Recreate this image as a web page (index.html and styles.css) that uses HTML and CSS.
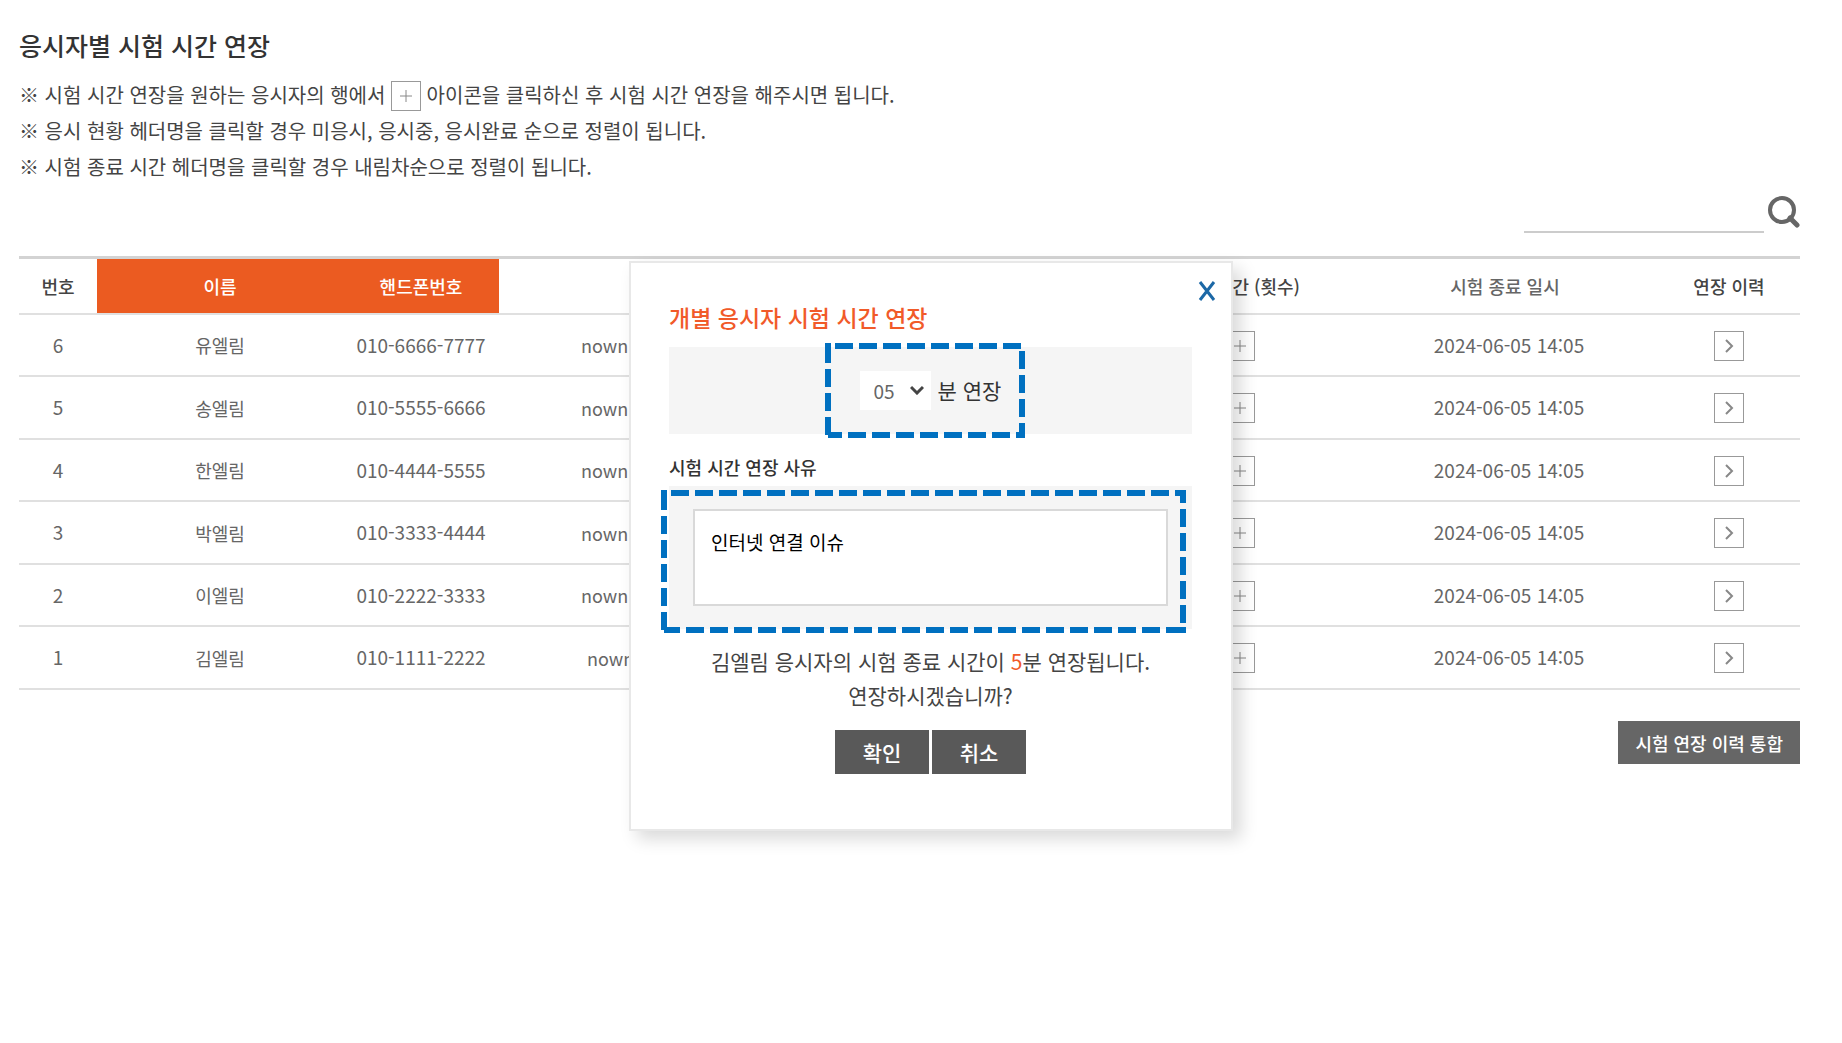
FILE: index.html
```
<!doctype html>
<html lang="ko">
    <head>
        <meta charset="UTF-8" />
        <meta name="viewport" content="width=device-width, initial-scale=1.0" />
        <title>응시자별 시험 시간 연장</title>
        <link rel="stylesheet" href="styles.css">
    </head>
    <body>
        <main>
            <h1>응시자별 시험 시간 연장</h1>
            <ul class="notes">
                <li>※ 시험 시간 연장을 원하는 응시자의 행에서 <span class="box"><svg width="14" height="14" viewBox="0 0 14 14"><path d="M7 1v12M1 7h12" /></svg></span> 아이콘을 클릭하신 후 시험 시간 연장을 해주시면 됩니다.</li>
                <li>※ 응시 현황 헤더명을 클릭할 경우 미응시, 응시중, 응시완료 순으로 정렬이 됩니다.</li>
                <li>※ 시험 종료 시간 헤더명을 클릭할 경우 내림차순으로 정렬이 됩니다.</li>
            </ul>

            <form class="search">
                <input type="search" aria-label="검색" />
                <button type="button" aria-label="검색">
                    <svg width="32" height="34" viewBox="0 0 32 34"><circle cx="14" cy="14" r="12" /><path d="M22 22l7 7" stroke-width="5" /></svg>
                </button>
            </form>

            <table>
                <colgroup>
                    <col class="col-no" />
                    <col class="col-name" />
                    <col class="col-phone" />
                    <col />
                    <col class="col-time" />
                    <col class="col-end" />
                    <col class="col-log" />
                </colgroup>
                <thead>
                    <tr>
                        <th>번호</th>
                        <th class="on">이름</th>
                        <th class="on">핸드폰번호</th>
                        <th></th>
                        <th class="time">시간 (횟수)</th>
                        <th class="end">시험 종료 일시</th>
                        <th>연장 이력</th>
                    </tr>
                </thead>
                <tbody>
                    <tr>
                        <td class="num">6</td>
                        <td>유엘림</td>
                        <td class="num">010-6666-7777</td>
                        <td class="mail">nown</td>
                        <td><button class="box" aria-label="연장"><svg width="14" height="14" viewBox="0 0 14 14"><path d="M7 1v12M1 7h12" /></svg></button></td>
                        <td class="num date">2024-06-05 14:05</td>
                        <td><button class="box arrow" aria-label="이력"><svg width="14" height="14" viewBox="0 0 14 14"><path d="M4 1l6 6-6 6" /></svg></button></td>
                    </tr>
                    <tr>
                        <td class="num">5</td>
                        <td>송엘림</td>
                        <td class="num">010-5555-6666</td>
                        <td class="mail">nown</td>
                        <td><button class="box" aria-label="연장"><svg width="14" height="14" viewBox="0 0 14 14"><path d="M7 1v12M1 7h12" /></svg></button></td>
                        <td class="num date">2024-06-05 14:05</td>
                        <td><button class="box arrow" aria-label="이력"><svg width="14" height="14" viewBox="0 0 14 14"><path d="M4 1l6 6-6 6" /></svg></button></td>
                    </tr>
                    <tr>
                        <td class="num">4</td>
                        <td>한엘림</td>
                        <td class="num">010-4444-5555</td>
                        <td class="mail">nown</td>
                        <td><button class="box" aria-label="연장"><svg width="14" height="14" viewBox="0 0 14 14"><path d="M7 1v12M1 7h12" /></svg></button></td>
                        <td class="num date">2024-06-05 14:05</td>
                        <td><button class="box arrow" aria-label="이력"><svg width="14" height="14" viewBox="0 0 14 14"><path d="M4 1l6 6-6 6" /></svg></button></td>
                    </tr>
                    <tr>
                        <td class="num">3</td>
                        <td>박엘림</td>
                        <td class="num">010-3333-4444</td>
                        <td class="mail">nown</td>
                        <td><button class="box" aria-label="연장"><svg width="14" height="14" viewBox="0 0 14 14"><path d="M7 1v12M1 7h12" /></svg></button></td>
                        <td class="num date">2024-06-05 14:05</td>
                        <td><button class="box arrow" aria-label="이력"><svg width="14" height="14" viewBox="0 0 14 14"><path d="M4 1l6 6-6 6" /></svg></button></td>
                    </tr>
                    <tr>
                        <td class="num">2</td>
                        <td>이엘림</td>
                        <td class="num">010-2222-3333</td>
                        <td class="mail">nown</td>
                        <td><button class="box" aria-label="연장"><svg width="14" height="14" viewBox="0 0 14 14"><path d="M7 1v12M1 7h12" /></svg></button></td>
                        <td class="num date">2024-06-05 14:05</td>
                        <td><button class="box arrow" aria-label="이력"><svg width="14" height="14" viewBox="0 0 14 14"><path d="M4 1l6 6-6 6" /></svg></button></td>
                    </tr>
                    <tr>
                        <td class="num">1</td>
                        <td>김엘림</td>
                        <td class="num">010-1111-2222</td>
                        <td class="mail short">nown</td>
                        <td><button class="box" aria-label="연장"><svg width="14" height="14" viewBox="0 0 14 14"><path d="M7 1v12M1 7h12" /></svg></button></td>
                        <td class="num date">2024-06-05 14:05</td>
                        <td><button class="box arrow" aria-label="이력"><svg width="14" height="14" viewBox="0 0 14 14"><path d="M4 1l6 6-6 6" /></svg></button></td>
                    </tr>
                </tbody>
            </table>

            <div class="actions">
                <button class="btn btn-all">시험 연장 이력 통합</button>
            </div>
        </main>

        <div class="modal" role="dialog" aria-labelledby="modal-title">
            <button class="close" aria-label="닫기">
                <svg width="18" height="20" viewBox="0 0 18 20"><path d="M2 1l14 18M16 1L2 19" /></svg>
            </button>
            <h2 id="modal-title">개별 응시자 시험 시간 연장</h2>

            <div class="panel minutes">
                <span class="select">
                    <select id="minutes">
                        <option>05</option>
                    </select>
                    <svg width="14" height="10" viewBox="0 0 14 10"><path d="M1 2l6 6 6-6" /></svg>
                </span>
                <label for="minutes">분 연장</label>
                <!-- dashed guide around the minute picker -->
                <svg class="guide guide-minutes" width="200" height="95" viewBox="0 0 200 95">
                    <path d="M10 3h187" />
                    <path d="M197 8v87" />
                    <path d="M3 92h14M191 92h9" />
                    <path d="M23 92h162" />
                    <path d="M3 0v18M3 16v4" />
                    <path d="M3 26v66" />
                </svg>
            </div>

            <label class="reason-label" for="reason">시험 시간 연장 사유</label>
            <div class="panel reason">
                <textarea id="reason">인터넷 연결 이슈</textarea>
                <!-- dashed guide around the reason box -->
                <svg class="guide guide-reason" width="525" height="143" viewBox="0 0 525 143">
                    <path d="M10 3h515" />
                    <path d="M522 0v13" />
                    <path d="M522 19v114" />
                    <path d="M3 140h16" />
                    <path d="M25 140h474" />
                    <path d="M505 140h18M519 140h6" />
                    <path d="M3 0v18M3 16v4" />
                    <path d="M3 26v114" />
                </svg>
            </div>

            <p class="message">
                김엘림 응시자의 시험 종료 시간이 <em>5</em>분 연장됩니다.<br />
                연장하시겠습니까?
            </p>
            <div class="buttons">
                <button class="btn">확인</button>
                <button class="btn">취소</button>
            </div>
        </div>
    </body>
</html>
```
FILE: styles.css
```
* {
    box-sizing: border-box;
}
body {
    margin: 0;
    background: #fff;
    color: #444;
    font-family: "Noto Sans CJK KR", sans-serif;
    font-size: 18px;
}
button,
input,
select,
textarea {
    margin: 0;
    padding: 0;
    border: 0;
    font-family: inherit;
}
button {
    cursor: pointer;
}
svg {
    fill: none;
    stroke: #888;
}
main {
    padding: 27px 42px 0 19px;
}
h1 {
    margin: 0;
    font-size: 25px;
    font-weight: 500;
    line-height: 36px;
    color: #333;
}
.notes {
    margin: 14px 0 0;
    padding: 0;
    list-style: none;
    font-size: 20px;
    line-height: 36px;
}
.notes li {
    height: 36px;
}
.box {
    display: inline-flex;
    align-items: center;
    justify-content: center;
    width: 30px;
    height: 30px;
    border: 1px solid #999;
    background: #fff;
    vertical-align: middle;
}
.notes .box {
    margin-bottom: 4px;
}
.box.arrow svg {
    stroke-width: 2;
}

.search {
    display: flex;
    justify-content: flex-end;
    gap: 4px;
    height: 37px;
    margin-bottom: 23px;
    margin-top: 11px;
}
.search input {
    width: 240px;
    height: 37px;
    border-bottom: 2px solid #ccc;
    font-size: 18px;
    outline: none;
}
.search button {
    height: 34px;
    background: none;
}
.search svg {
    display: block;
    stroke: #666;
    stroke-width: 4;
    stroke-linecap: round;
}

table {
    width: 100%;
    table-layout: fixed;
    border-collapse: separate;
    border-spacing: 0;
    border-top: 3px solid #d3d3d3;
    text-align: center;
}
.col-no {
    width: 78px;
}
.col-name {
    width: 246px;
}
.col-phone {
    width: 156px;
}
.col-time {
    width: 224px;
}
.col-end {
    width: 306px;
}
.col-log {
    width: 142px;
}
th,
td {
    padding: 0;
    border-bottom: 2px solid #e0e0e0;
}
th {
    height: 56px;
    font-weight: 500;
    color: #444;
}
th.on {
    background: #eb5b21;
    color: #fff;
}
th.end {
    color: #666;
}
th.time {
    padding-right: 52px;
    text-align: right;
}
td {
    height: 62px;
    color: #666;
}
tr:nth-child(even) td {
    height: 63px;
}
.num {
    padding-bottom: 2px;
    font-size: 19px;
}
.date {
    padding-left: 8px;
}
.mail {
    padding-left: 82px;
    text-align: left;
}
.mail.short {
    padding-left: 88px;
}

.btn {
    background: #595959;
    color: #fff;
    font-weight: 500;
}
.actions {
    display: flex;
    justify-content: flex-end;
    margin-top: 31px;
}
.btn-all {
    padding: 0 17px;
    height: 43px;
    font-size: 18px;
    background: #666;
}

.modal {
    position: absolute;
    top: 261px;
    left: 629px;
    width: 604px;
    padding: 36px 39px 55px 38px;
    border: 2px solid #e8e8e8;
    background: #fff;
    box-shadow: 8px 8px 16px rgba(0, 0, 0, 0.15);
}
.close {
    position: absolute;
    top: 18px;
    right: 15px;
    height: 20px;
    background: none;
}
.close svg {
    display: block;
    stroke: #1c68a6;
    stroke-width: 3;
}
h2 {
    margin: 0 0 12px;
    font-size: 23px;
    font-weight: 500;
    line-height: 36px;
    color: #f15a29;
}
.panel {
    position: relative;
    background: #f5f5f5;
}
.minutes {
    display: flex;
    align-items: center;
    justify-content: center;
    gap: 7px;
    height: 87px;
    font-size: 21px;
    color: #333;
}
.minutes label {
    padding-bottom: 2px;
}
.select {
    position: relative;
}
.select select {
    display: block;
    width: 71px;
    height: 39px;
    padding-left: 14px;
    appearance: none;
    background: #fff;
    font-size: 19px;
    color: #666;
}
.select svg {
    position: absolute;
    top: 14px;
    right: 7px;
    stroke: #444;
    stroke-width: 3;
    pointer-events: none;
}
.guide {
    position: absolute;
    stroke: #0070c0;
    stroke-width: 6;
    stroke-dasharray: 18 6;
    pointer-events: none;
}
.guide-minutes {
    top: -4px;
    left: 156px;
}
.guide-reason {
    top: 4px;
    left: -8px;
}
.reason-label {
    display: block;
    margin: 19px 0 5px;
    font-weight: 500;
    line-height: 28px;
    color: #333;
}
.reason {
    height: 143px;
    padding: 23px 24px;
}
.reason textarea {
    display: block;
    width: 100%;
    height: 97px;
    padding: 17px 16px;
    border: 2px solid #d9d9d9;
    resize: none;
    font-size: 19px;
    line-height: 28px;
    color: #000;
    outline: none;
}
.message {
    margin: 15px 0 18px;
    font-size: 21px;
    line-height: 34px;
    text-align: center;
}
.message em {
    font-style: normal;
    color: #f15a29;
}
.buttons {
    display: flex;
    justify-content: center;
    gap: 3px;
}
.buttons .btn {
    width: 94px;
    height: 44px;
    font-size: 21px;
}
```
